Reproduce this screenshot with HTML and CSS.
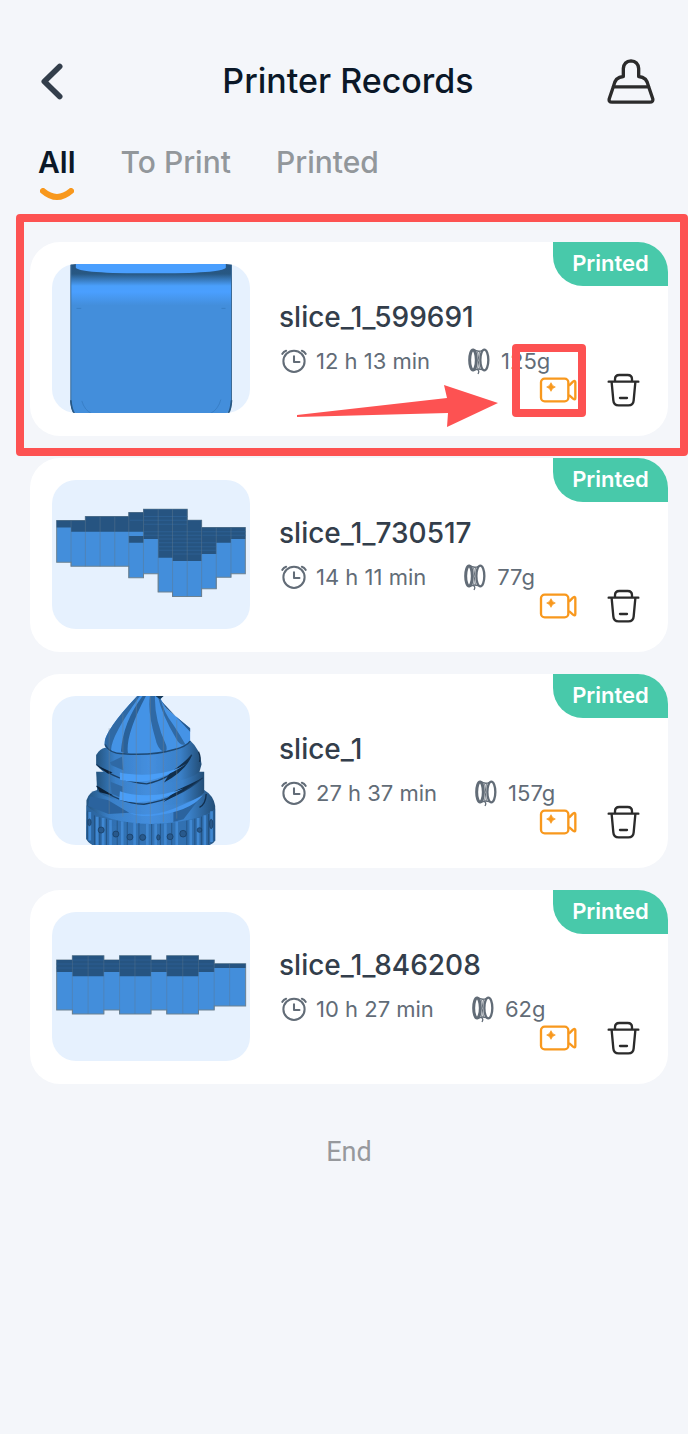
FILE: index.html
```html
<!DOCTYPE html>
<html lang="en">
<head>
  <meta charset="UTF-8">
  <meta name="viewport" content="width=device-width, initial-scale=1">
  <title>Printer Records</title>
  <link rel="stylesheet" href="styles.css">
</head>
<body>
  <!-- shared icons -->
  <svg class="sprite" aria-hidden="true">
    <symbol id="clock" viewBox="34 178 76 76">
      <g fill="none" stroke="currentColor" stroke-width="6" stroke-linecap="round">
        <circle cx="72" cy="217" r="31"/>
        <path d="M72 202V219H88M38 195Q42 188 49 186M106 195Q102 188 95 186" stroke-linejoin="round"/>
      </g>
    </symbol>
    <symbol id="spool" viewBox="0 0 66 81">
      <g fill="none" stroke="currentColor">
        <ellipse cx="15" cy="36" rx="10" ry="30" stroke-width="9"/>
        <ellipse cx="49" cy="36" rx="12" ry="31" stroke-width="7"/>
        <path d="M16 4Q29 13 42 8M16 68Q29 60 42 65" stroke-width="4"/>
        <path d="M28 12Q20 36 28 62M34 12Q27 36 34 62" stroke-width="3"/>
        <path d="M27 64Q36 68 30 78" stroke-width="4"/>
      </g>
    </symbol>
    <symbol id="video" viewBox="235 500 114 84">
      <g fill="none" stroke="currentColor" stroke-width="7" stroke-linejoin="round">
        <rect x="241" y="508" width="82" height="68" rx="11"/>
        <path d="M325 529L337 517Q344 512 344 519V566Q344 573 337 568L325 557"/>
      </g>
      <path d="M271 520Q274 530 284 533Q274 536 271 546Q268 536 258 533Q268 530 271 520Z" fill="currentColor" stroke="currentColor" stroke-width="2"/>
    </symbol>
    <symbol id="trash" viewBox="440 490 99 102">
      <g fill="none" stroke="currentColor" stroke-width="7" stroke-linecap="round" stroke-linejoin="round">
        <path d="M445 516H534M464 515V509Q464 496 477 496H502Q515 496 515 509V515"/>
        <path d="M454 518L459 572Q460 587 475 587H504Q519 587 520 572L525 518"/>
        <path d="M479 565H500"/>
      </g>
    </symbol>
  </svg>

  <div class="page">
    <header class="header">
      <button type="button" class="icon-btn back" aria-label="Back">
        <svg viewBox="125 70 66 110"><path d="M181 80L135 125L181 170" fill="none" stroke="currentColor" stroke-width="17" stroke-linecap="round" stroke-linejoin="round"/></svg>
      </button>
      <h1>Printer Records</h1>
      <button type="button" class="icon-btn clean" aria-label="Clean records">
        <svg viewBox="82 56 144 140">
          <g fill="none" stroke="currentColor" stroke-width="10" stroke-linejoin="round">
            <path d="M101 142Q106 112 131 111V87Q133 65 154 64Q175 65 177 87V111Q202 112 207 142"/>
            <path d="M101 142L89 177Q86 188 97 188H210Q222 188 219 177L207 142Z"/>
          </g>
        </svg>
      </button>
    </header>

    <nav class="tabs">
      <button type="button" class="tab active">All
        <svg class="smile" viewBox="0 0 34 13"><path d="M3 3Q17 15 31 3" fill="none" stroke="currentColor" stroke-width="6" stroke-linecap="round"/></svg>
      </button>
      <button type="button" class="tab">To Print</button>
      <button type="button" class="tab">Printed</button>
    </nav>

    <main class="records">
      <article class="card">
        <div class="thumb">
          <svg viewBox="108 162 594 446" preserveAspectRatio="xMidYMid slice">
            <defs>
              <linearGradient id="shade" x1="0" y1="0" x2="0" y2="1">
                <stop offset="0" stop-color="#265481"/>
                <stop offset="0.070" stop-color="#285883"/>
                <stop offset="0.150" stop-color="#4a9ffb"/>
                <stop offset="0.190" stop-color="#4a9fff"/>
                <stop offset="0.280" stop-color="#438edb"/>
                <stop offset="1" stop-color="#438edb"/>
              </linearGradient>
            </defs>
            <path d="M165 160H646V575Q644 598 636 610H176Q167 598 165 575Z" fill="url(#shade)" stroke="#3d6b96" stroke-width="3"/>
            <path d="M180 160H629V173Q618 190 404 190Q192 190 180 173Z" fill="#4a9fff"/>
            <path d="M198 572Q206 600 228 610M614 568Q606 598 582 610M182 295H196M616 295H628" fill="none" stroke="#3478bd" stroke-width="2"/>
            <path d="M165 570Q167 598 176 610M646 570Q644 598 636 610" fill="none" stroke="#275783" stroke-width="5"/>
          </svg>
        </div>
        <div class="info">
          <h2>slice_1_599691</h2>
          <p class="meta">
            <svg class="clock"><use href="#clock"/></svg><span>12 h 13 min</span>
            <svg class="spool"><use href="#spool"/></svg><span>125g</span>
          </p>
          <div class="actions">
            <button type="button" class="icon-btn video" aria-label="Video"><svg><use href="#video"/></svg></button>
            <button type="button" class="icon-btn trash" aria-label="Delete"><svg><use href="#trash"/></svg></button>
          </div>
        </div>
        <span class="badge">Printed</span>
        <!-- guide marks over the first record -->
        <div class="mark mark-card"></div>
        <div class="mark mark-video"></div>
        <svg class="arrow" viewBox="0 0 202 42"><path d="M0 30L150 13L147 0L201 18L150 42L151 28L0 32Z" fill="currentColor"/></svg>
      </article>

      <article class="card">
        <div class="thumb">
          <svg viewBox="37 30 593 447" preserveAspectRatio="xMidYMid slice">
            <path d="M51 152H137V140H267V128H311V118H442V151H485V173H616V311H573V322H529V356H485V379H398V366H355V311H311V323H267V289H94V277H51Z" fill="#438edb" stroke="#6d8291" stroke-width="3"/>
            <path d="M51 152H137V140H267V128H311V118H442V151H485V173H616V207H573V218H529V252H485V273H398V263H355V207H311V218H267V198H311V185H94V173H51Z" fill="#265481"/>
            <path d="M312 140H442M312 151H442M312 163H442M312 185H485M312 196H485M356 207H485M356 218H528M356 230H528M356 241H528M400 252H485M487 185H616M487 196H616M270 151H310" stroke="#2c5f92" stroke-width="3"/>
            <path d="M94 152V289M137 140V289M181 140V289M225 140V289M267 128V323M311 118V311M355 118V366M398 118V379M442 118V379M485 151V379M529 173V356M573 173V322" stroke="#5d7890" stroke-width="2" opacity="0.700"/>
          </svg>
        </div>
        <div class="info">
          <h2>slice_1_730517</h2>
          <p class="meta">
            <svg class="clock"><use href="#clock"/></svg><span>14 h 11 min</span>
            <svg class="spool"><use href="#spool"/></svg><span>77g</span>
          </p>
          <div class="actions">
            <button type="button" class="icon-btn video" aria-label="Video"><svg><use href="#video"/></svg></button>
            <button type="button" class="icon-btn trash" aria-label="Delete"><svg><use href="#trash"/></svg></button>
          </div>
        </div>
        <span class="badge">Printed</span>
      </article>

      <article class="card">
        <div class="thumb">
          <svg viewBox="37 33 592 446" preserveAspectRatio="xMidYMid slice">
            <defs>
              <linearGradient id="round" x1="0" x2="1">
                <stop offset="0" stop-color="#24547f"/>
                <stop offset="0.180" stop-color="#3a80c8"/>
                <stop offset="0.500" stop-color="#458fdf"/>
                <stop offset="0.800" stop-color="#3a80c8"/>
                <stop offset="1" stop-color="#224d76"/>
              </linearGradient>
            </defs>
            <!-- base with ribs -->
            <path d="M140 345Q148 318 172 314H492Q520 330 525 362V465Q520 475 505 480H160Q143 470 139 460Z" fill="url(#round)"/>
            <path d="M140 360Q190 412 330 416Q480 410 525 370V465L505 480H160L139 460Z" fill="#2d69a6" opacity="0.700"/>
            <path d="M150 380V465M172 394V480M190 398V480M212 404V480M247 408V480M284 412V480M322 415V480M347 415V480M376 414V480M410 410V480M452 403V480M474 398V480M494 390V480M514 378V470" stroke="#4088d2" stroke-width="8"/>
            <path d="M143 376V462M164 390V478M180 396V480M200 400V480M232 406V480M262 410V480M297 413V480M335 416V480M361 415V480M395 413V480M440 406V480M464 400V480M484 394V480M505 386V478M522 370V465" stroke="#1f4a75" stroke-width="2"/>
            <g fill="#28598c" stroke="#183b5e" stroke-width="2">
              <ellipse cx="149" cy="411" rx="5" ry="10"/><circle cx="184" cy="434" r="9"/><circle cx="228" cy="446" r="9"/><circle cx="270" cy="455" r="9"/><circle cx="308" cy="456" r="9"/><ellipse cx="355" cy="456" rx="5" ry="8"/><circle cx="390" cy="454" r="9"/><circle cx="429" cy="445" r="10"/><circle cx="478" cy="434" r="7"/><ellipse cx="513" cy="416" rx="5" ry="14"/>
            </g>
            <!-- twisted layers -->
            <path d="M169 260H492V322Q466 350 410 357Q250 370 172 318Z" fill="url(#round)"/>
            <path d="M169 210Q180 190 196 188L450 166Q482 194 484 238L478 260Q450 285 368 296H284Q202 282 169 238Z" fill="url(#round)"/>
            <path d="M170 238Q230 288 320 296Q400 280 455 209" fill="none" stroke="#1b4067" stroke-width="4"/>
            <path d="M372 292Q440 255 456 209Q432 232 390 263Z" fill="#122f4d"/>
            <path d="M170 303Q238 354 312 357Q415 342 488 278" fill="none" stroke="#1b4067" stroke-width="4"/>
            <path d="M370 350Q430 323 488 278Q450 298 405 317Z" fill="#122f4d"/>
            <path d="M170 240L218 262L205 266ZM170 301L220 331L180 321Z" fill="#0c2138"/>
            <path d="M210 232L246 215L250 255L215 240ZM212 290L248 304V340L215 325Z" fill="#2f6aa6"/>
            <path d="M205 345L268 382L206 386ZM150 333L206 345V386L145 362ZM400 372L470 350L430 402L400 410Z" fill="#2b639e"/>
            <path d="M240 284Q335 308 440 235Q400 262 330 268Q270 270 240 262ZM238 344Q330 368 430 310Q380 330 320 330Q270 330 240 318Z" fill="#4a9ff7"/>
            <path d="M268 382Q330 398 400 370Q450 350 488 330Q450 380 335 392Q290 394 268 382Z" fill="#4797ee"/>
            <path d="M478 366Q497 356 498 326M478 230Q482 215 475 200" fill="none" stroke="#12304f" stroke-width="4"/>
            <!-- swirl on top -->
            <path d="M292 33H370L362 42L378 70L450 130V168Q430 190 375 200Q270 215 210 200Q190 185 196 160Q215 115 292 33Z" fill="#4593e6"/>
            <path d="M292 33Q190 140 194 180Q200 196 214 200Q208 160 300 33Z" fill="#2f6aa6"/>
            <path d="M308 33Q250 110 243 199Q252 206 264 204Q256 150 318 33Z" fill="#2a619b"/>
            <path d="M330 33Q322 80 346 160Q352 190 370 200Q384 200 378 180Q342 100 345 33Z" fill="#2f6aa6"/>
            <path d="M354 36Q366 90 408 160Q420 184 436 178Q420 150 400 120Q370 80 362 42Z" fill="#2f6aa6"/>
            <path d="M362 46L450 140V130L378 70Z" fill="#28598c"/>
            <path d="M196 178Q206 204 250 206Q340 212 400 194Q440 184 450 168" fill="none" stroke="#1f4a75" stroke-width="4"/>
            <path d="M346 33H371L360 43Z" fill="#173957"/>
            <path d="M208 130V386M249 85V394M289 40V414M331 33V416M370 64V410M410 105V400" stroke="#6e7f8e" stroke-width="2" opacity="0.700"/>
          </svg>
        </div>
        <div class="info">
          <h2>slice_1</h2>
          <p class="meta">
            <svg class="clock"><use href="#clock"/></svg><span>27 h 37 min</span>
            <svg class="spool"><use href="#spool"/></svg><span>157g</span>
          </p>
          <div class="actions">
            <button type="button" class="icon-btn video" aria-label="Video"><svg><use href="#video"/></svg></button>
            <button type="button" class="icon-btn trash" aria-label="Delete"><svg><use href="#trash"/></svg></button>
          </div>
        </div>
        <span class="badge">Printed</span>
      </article>

      <article class="card">
        <div class="thumb">
          <svg viewBox="37 35 592 446" preserveAspectRatio="xMidYMid slice">
            <path d="M51 179H98V166H192V179H239V166H333V179H380V166H475V179H522V190H616V316H522V328H475V340H380V328H333V340H239V328H192V340H98V328H51Z" fill="#438edb" stroke="#6d8291" stroke-width="3"/>
            <path d="M51 179H98V166H192V179H239V166H333V179H380V166H475V179H522V190H616V203H522V215H475V227H380V215H333V227H239V215H192V227H98V215H51Z" fill="#265481"/>
            <path d="M51 191H520M51 203H520M98 179H192M239 179H333M380 179H475" stroke="#2b5d91" stroke-width="3"/>
            <path d="M98 166V340M145 166V340M192 166V340M239 166V340M285 166V340M333 166V340M380 166V340M428 166V340M475 166V340M522 179V328M568 190V316" stroke="#5d7890" stroke-width="2" opacity="0.600"/>
          </svg>
        </div>
        <div class="info">
          <h2>slice_1_846208</h2>
          <p class="meta">
            <svg class="clock"><use href="#clock"/></svg><span>10 h 27 min</span>
            <svg class="spool"><use href="#spool"/></svg><span>62g</span>
          </p>
          <div class="actions">
            <button type="button" class="icon-btn video" aria-label="Video"><svg><use href="#video"/></svg></button>
            <button type="button" class="icon-btn trash" aria-label="Delete"><svg><use href="#trash"/></svg></button>
          </div>
        </div>
        <span class="badge">Printed</span>
      </article>
    </main>

    <p class="end">End</p>
  </div>
</body>
</html>
```
FILE: styles.css
```css
* { box-sizing: border-box; }

body {
  margin: 0;
  background-color: #f4f6fa;
  font-family: Inter, "Liberation Sans", sans-serif;
  color: #333e4b;
}

h1, h2, p { margin: 0; }
svg { display: block; }
.sprite { position: absolute; width: 0; height: 0; }

button {
  border: none;
  background: none;
  padding: 0;
  font-family: inherit;
  color: inherit;
  cursor: pointer;
}

.page { padding: 56px 20px 40px 30px; }

.header {
  display: grid;
  grid-template-columns: 1fr auto 1fr;
  align-items: center;
  height: 50px;
  padding: 0 13px 0 11px;
}
.header h1 {
  font-size: 34px;
  font-weight: 500;
  line-height: 50px;
  color: #0b1828;
}
.back svg { width: 22px; height: 37px; }
.clean { justify-self: end; color: #2b2b2b; }
.clean svg { width: 48px; height: 47px; }

.tabs {
  display: flex;
  align-items: flex-start;
  gap: 45px;
  height: 100px;
  margin-top: 36px;
  padding-left: 8px;
}
.tab {
  font-size: 30px;
  font-weight: 500;
  line-height: 40px;
  color: #92979b;
}
.tab.active {
  font-weight: 600;
  color: #0b1828;
}
.smile {
  width: 34px;
  height: 13px;
  margin: 6px auto 0;
  color: #f8981d;
}

.records {
  display: flex;
  flex-direction: column;
  gap: 22px;
}

.card {
  position: relative;
  display: flex;
  gap: 29px;
  min-height: 194px;
  padding: 22px;
  background-color: white;
  border-radius: 30px;
}
.thumb {
  flex: none;
  width: 198px;
  height: 149px;
  border-radius: 24px;
  background-color: #e6f1fe;
  overflow: hidden;
}
.thumb svg { width: 100%; height: 100%; }

.info {
  flex: 1;
  padding-top: 33px;
}
.info h2 {
  font-size: 28px;
  font-weight: 500;
  line-height: 40px;
}
.meta {
  display: flex;
  align-items: center;
  margin-top: 8px;
  font-size: 22px;
  line-height: 32px;
  color: #626c77;
  white-space: nowrap;
}
.clock { width: 26px; height: 26px; margin: 0 9px 0 2px; }
.spool { width: 22px; height: 27px; margin: 0 11px 0 38px; }

.actions {
  display: flex;
  justify-content: flex-end;
  align-items: center;
  gap: 30px;
  margin-top: -4px;
  padding-right: 6px;
}
.video { color: #f8981d; }
.video svg { width: 38px; height: 28px; }
.trash { color: #2b2b2b; }
.trash svg { width: 33px; height: 34px; }

.badge {
  position: absolute;
  top: 0;
  right: 0;
  width: 115px;
  height: 44px;
  border-radius: 0 30px 0 30px;
  background-color: #48c9aa;
  color: white;
  font-size: 22px;
  font-weight: 600;
  line-height: 43px;
  text-align: center;
}

/* red guide marks */
.mark {
  position: absolute;
  border: 8px solid #fd5252;
  border-radius: 4px;
  pointer-events: none;
}
.mark-card {
  top: -28px;
  right: -20px;
  bottom: -20px;
  left: -14px;
}
.mark-video {
  top: 102px;
  right: 82px;
  width: 74px;
  height: 73px;
}
.arrow {
  position: absolute;
  top: 143px;
  right: 169px;
  width: 202px;
  height: 42px;
  color: #fd5252;
}

.end {
  margin-top: 48px;
  font-family: Roboto, sans-serif;
  font-size: 27px;
  line-height: 40px;
  text-align: center;
  color: #97999d;
}
```
